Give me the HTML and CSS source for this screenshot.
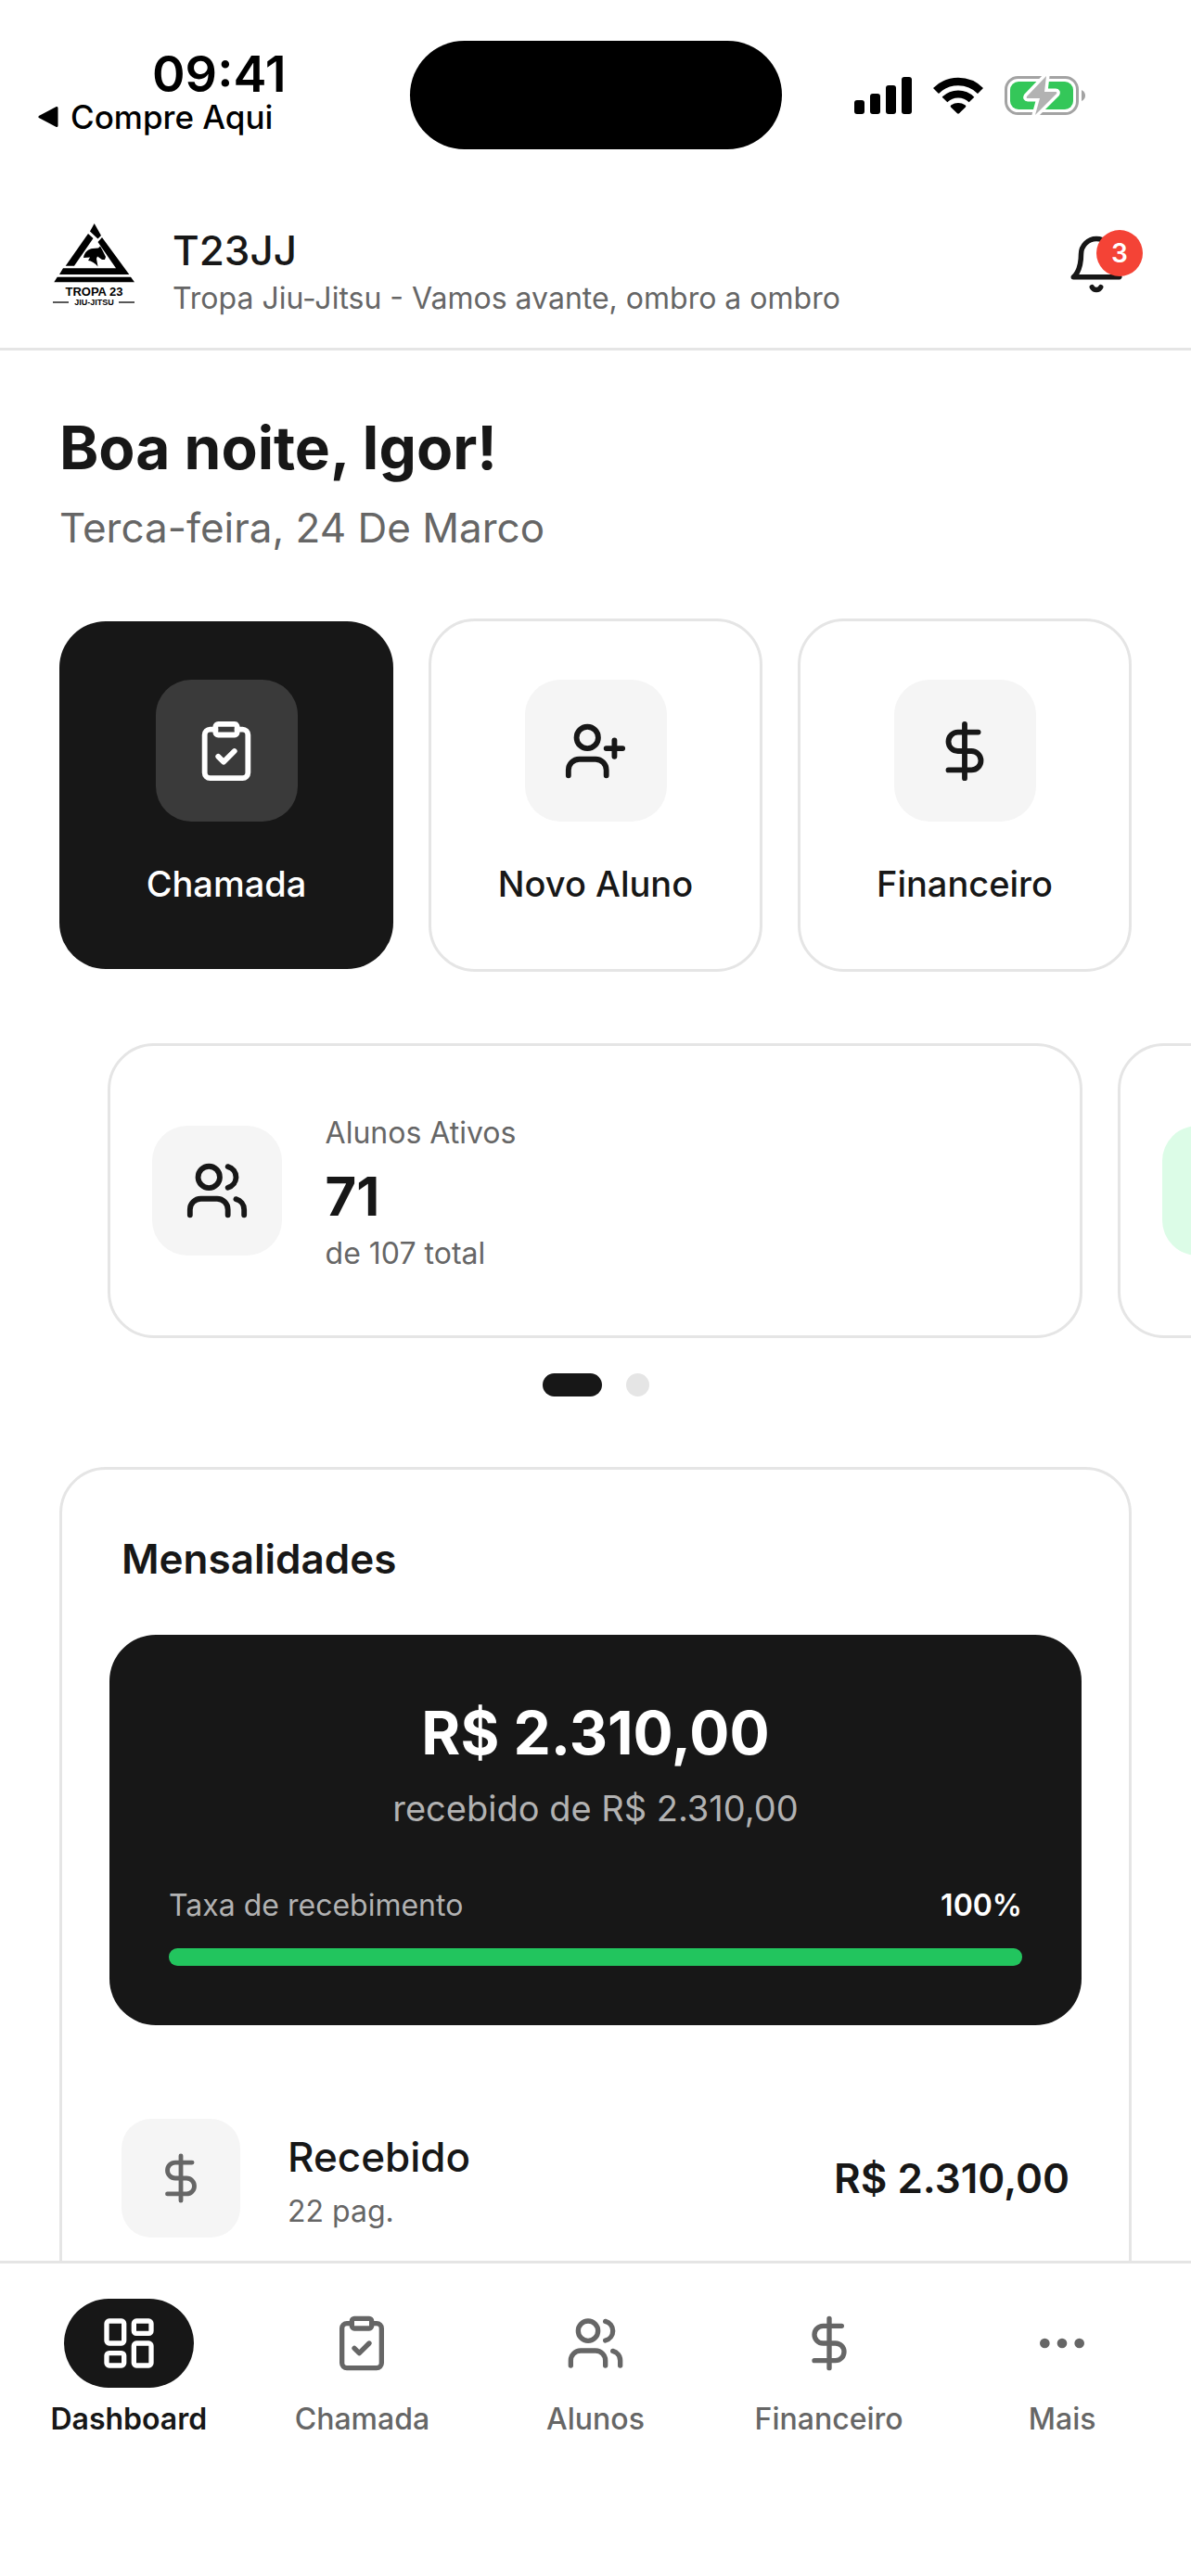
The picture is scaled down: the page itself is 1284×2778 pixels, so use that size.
FILE: index.html
```html
<!DOCTYPE html>
<html lang="pt-BR">
<head>
<meta charset="utf-8">
<meta name="viewport" content="width=device-width, initial-scale=1">
<title>T23JJ</title>
<link rel="stylesheet" href="styles.css">
</head>
<body>
<svg class="sprite" aria-hidden="true">
  <symbol id="clipboard" viewBox="0 0 24 24"><rect x="8" y="2" width="8" height="4" rx="1"/><path d="M16 4h2a2 2 0 0 1 2 2v14a2 2 0 0 1-2 2H6a2 2 0 0 1-2-2V6a2 2 0 0 1 2-2h2"/><path d="m9 14 2 2 4-4"/></symbol>
  <symbol id="user-plus" viewBox="0 0 24 24"><path d="M16 21v-2a4 4 0 0 0-4-4H6a4 4 0 0 0-4 4v2"/><circle cx="9" cy="7" r="4"/><path d="M19 8v6M22 11h-6"/></symbol>
  <symbol id="users" viewBox="0 0 24 24"><path d="M16 21v-2a4 4 0 0 0-4-4H6a4 4 0 0 0-4 4v2"/><circle cx="9" cy="7" r="4"/><path d="M22 21v-2a4 4 0 0 0-3-3.87M16 3.13a4 4 0 0 1 0 7.75"/></symbol>
  <symbol id="dollar" viewBox="0 0 24 24"><path d="M12 2v20M17 5H9.5a3.5 3.5 0 0 0 0 7h5a3.5 3.5 0 0 1 0 7H6"/></symbol>
  <symbol id="bell" viewBox="0 0 24 24"><path d="M6 8a6 6 0 0 1 12 0c0 7 3 9 3 9H3s3-2 3-9M10.3 21a1.94 1.94 0 0 0 3.4 0"/></symbol>
  <symbol id="dashboard" viewBox="0 0 24 24"><rect x="3" y="3" width="7" height="9" rx="1"/><rect x="14" y="3" width="7" height="5" rx="1"/><rect x="14" y="12" width="7" height="9" rx="1"/><rect x="3" y="16" width="7" height="5" rx="1"/></symbol>
  <symbol id="more" viewBox="0 0 24 24"><circle cx="5" cy="12" r="1"/><circle cx="12" cy="12" r="1"/><circle cx="19" cy="12" r="1"/></symbol>
</svg>

<div class="app">
  <div class="status">
    <div class="status-left">
      <div class="clock">09:41</div>
      <a class="back" href="#">
        <svg width="22" height="22" viewBox="0 0 22 22"><path d="M20 1.500V20.500L2 11Z" fill="#000" stroke="#000" stroke-width="3" stroke-linejoin="round"/></svg>
        Compre Aqui
      </a>
    </div>
    <div class="island"></div>
    <div class="status-right">
      <svg width="62" height="40" viewBox="0 0 62 40"><rect y="25" width="11" height="15" rx="3"/><rect x="17" y="18" width="11" height="22" rx="3"/><rect x="34" y="9" width="11" height="31" rx="3"/><rect x="51" width="11" height="40" rx="3"/></svg>
      <svg width="54" height="40" viewBox="0 0 54 40"><g fill="none" stroke="#000"><path d="M3 15A34 34 0 0 1 51 15" stroke-width="8.500"/><path d="M12.500 24.500A20.500 20.500 0 0 1 41.500 24.500" stroke-width="8"/></g><path d="M26 39.300 19 32.500Q18 31 19.500 30.300A13 13 0 0 1 34.500 30.300Q36 31 35 32.500L28 39.300Q27 40 26 39.300Z"/></svg>
      <svg width="88" height="44" viewBox="0 0 88 44"><rect x="1.500" y="2.500" width="77" height="39" rx="13" fill="none" stroke="#a3a3a3" stroke-width="3"/><rect x="6" y="7" width="68" height="30" rx="9" fill="#34c759"/><path d="M83 16Q87 18 87 22T83 28Z" fill="#a3a3a3"/><path d="M45 1 24 23Q23 25 25 25H38L33 43 56 20Q57 18 55 18H43Z" fill="#b2b2b2" stroke="#fff" stroke-width="7" stroke-linejoin="round" paint-order="stroke"/></svg>
    </div>
  </div>

  <header class="header">
    <svg class="logo" viewBox="0 0 96 96" role="img" aria-label="Tropa 23 Jiu-Jitsu">
      <path d="M47.700 4 55 17 51.500 20.500 43 12.500Z"/>
      <path d="M41 15 16.700 49.700H26L46.500 20Z"/>
      <path d="M56 19 85.300 59H10L14 52.300H71L51.500 24Z"/>
      <path d="M7.700 61.700H87L91 67.300H4.300Z"/>
      <path d="M36 41C37 35 41 31.500 46 31L52 30.500 54 28.500 56 32 60 40 59 43 56 43 51 39.500 50 42 51.500 50.500C49 47 44 44 41 44L43 40.500Z"/>
      <text class="logo-name" x="47.500" y="81.500" text-anchor="middle">TROPA 23</text>
      <text class="logo-sub" x="47.500" y="92" text-anchor="middle">JIU-JITSU</text>
      <path d="M3 89H20M74 89H91" stroke="#222" stroke-width="1.300"/>
    </svg>
    <div class="club">
      <div class="club-name">T23JJ</div>
      <div class="club-motto">Tropa Jiu-Jitsu - Vamos avante, ombro a ombro</div>
    </div>
    <button class="bell" type="button" aria-label="Notificações">
      <svg class="icon icon-66"><use href="#bell"/></svg>
      <span class="badge">3</span>
    </button>
  </header>

  <main class="main">
    <h1 class="greeting">Boa noite, Igor!</h1>
    <p class="date">Terca-feira, 24 De Marco</p>

    <div class="actions">
      <button class="action action-dark" type="button"><span class="tile"><svg class="icon icon-70"><use href="#clipboard"/></svg></span>Chamada</button>
      <button class="action" type="button"><span class="tile"><svg class="icon icon-70"><use href="#user-plus"/></svg></span>Novo Aluno</button>
      <button class="action" type="button"><span class="tile"><svg class="icon icon-70"><use href="#dollar"/></svg></span>Financeiro</button>
    </div>

    <div class="carousel">
      <section class="stat">
        <span class="stat-tile"><svg class="icon icon-70"><use href="#users"/></svg></span>
        <div class="stat-text">
          <div class="small">Alunos Ativos</div>
          <div class="stat-value">71</div>
          <div class="small">de 107 total</div>
        </div>
      </section>
      <section class="stat"><span class="stat-tile stat-tile-green"></span></section>
    </div>
    <div class="dots"><span class="dot dot-on"></span><span class="dot"></span></div>

    <section class="panel">
      <h2 class="panel-title">Mensalidades</h2>
      <div class="summary">
        <div class="summary-amount">R$ 2.310,00</div>
        <div class="summary-sub">recebido de R$ 2.310,00</div>
        <div class="rate"><span id="rate">Taxa de recebimento</span><strong class="rate-value">100%</strong></div>
        <div class="bar" role="progressbar" aria-labelledby="rate" aria-valuenow="100"><div class="bar-fill" style="width: 100%"></div></div>
      </div>
      <div class="row">
        <span class="row-tile"><svg class="icon icon-58"><use href="#dollar"/></svg></span>
        <div class="row-text">
          <div class="row-title">Recebido</div>
          <div class="small">22 pag.</div>
        </div>
        <div class="row-amount">R$ 2.310,00</div>
      </div>
    </section>
  </main>

  <nav class="nav">
    <a class="nav-item nav-on" href="#"><span class="nav-icon"><svg class="icon icon-64"><use href="#dashboard"/></svg></span>Dashboard</a>
    <a class="nav-item" href="#"><span class="nav-icon"><svg class="icon icon-64"><use href="#clipboard"/></svg></span>Chamada</a>
    <a class="nav-item" href="#"><span class="nav-icon"><svg class="icon icon-64"><use href="#users"/></svg></span>Alunos</a>
    <a class="nav-item" href="#"><span class="nav-icon"><svg class="icon icon-64"><use href="#dollar"/></svg></span>Financeiro</a>
    <a class="nav-item" href="#"><span class="nav-icon"><svg class="icon icon-64"><use href="#more"/></svg></span>Mais</a>
  </nav>
</div>
</body>
</html>
```
FILE: styles.css
```css
:root {
  --ink: #171717;
  --muted: #666666;
  --line: #e5e5e5;
  --soft: #f5f5f5;
}

* {
  box-sizing: border-box;
}

body {
  margin: 0;
  background: #fff;
  color: var(--ink);
  font-family: Inter, "Liberation Sans", sans-serif;
}

h1, h2, p {
  margin: 0;
}

button {
  font: inherit;
  color: inherit;
  background: none;
  border: 0;
  padding: 0;
}

a {
  color: inherit;
  text-decoration: none;
}

svg {
  display: block;
  flex: none;
}

.sprite {
  display: none;
}

.app {
  display: flex;
  flex-direction: column;
  height: 100vh;
}

.icon {
  fill: none;
  stroke: currentColor;
  stroke-width: 2;
  stroke-linecap: round;
  stroke-linejoin: round;
}

.icon-58 { width: 58px; height: 58px; }
.icon-64 { width: 64px; height: 64px; }
.icon-66 { width: 66px; height: 66px; }
.icon-70 { width: 70px; height: 70px; }

.small {
  color: var(--muted);
  font-size: 32px;
  line-height: 40px;
}

/* Status bar */
.status {
  display: grid;
  grid-template-columns: 1fr auto 1fr;
  flex: none;
  padding-top: 44px;
  height: 195px;
  color: #000;
}

.status-left {
  padding: 8px 0 0 41px;
}

.clock {
  padding-left: 123px;
  font-size: 54px;
  font-weight: 600;
  line-height: 56px;
}

.back {
  display: flex;
  align-items: center;
  gap: 13px;
  font-size: 35px;
  font-weight: 500;
  line-height: 36px;
}

.island {
  width: 401px;
  height: 117px;
  border-radius: 59px;
  background: #000;
}

.status-right {
  display: flex;
  align-items: center;
  gap: 23px;
  height: 117px;
  padding-left: 78px;
}

/* Header */
.header {
  display: flex;
  align-items: center;
  flex: none;
  height: 183px;
  padding: 0 64px 0 54px;
  border-bottom: 3px solid var(--line);
}

.logo {
  width: 96px;
  height: 96px;
}

.logo-name {
  font: bold 13px "Liberation Sans", sans-serif;
}

.logo-sub {
  font: bold 9px "Liberation Sans", sans-serif;
}

.club {
  flex: 1;
  padding: 14px 0 0 36px;
}

.club-name {
  font-size: 44px;
  font-weight: 500;
  line-height: 60px;
}

.club-motto {
  color: var(--muted);
  font-size: 32px;
  line-height: 44px;
}

.bell {
  position: relative;
  margin-right: 5px;
}

.badge {
  position: absolute;
  top: -4px;
  right: -17px;
  width: 50px;
  height: 50px;
  border-radius: 50%;
  background: #f44336;
  color: #fff;
  font-size: 28px;
  font-weight: 600;
  line-height: 50px;
  text-align: center;
}

/* Dashboard */
.main {
  flex: 1;
  min-height: 0;
  padding: 68px 64px 64px;
  overflow-y: auto;
  scrollbar-width: none;
}

.greeting {
  font-size: 64px;
  font-weight: 700;
  line-height: 74px;
}

.date {
  margin-top: 23px;
  color: var(--muted);
  font-size: 44px;
  line-height: 52px;
}

.actions {
  display: grid;
  grid-template-columns: repeat(3, 1fr);
  gap: 38px;
  margin-top: 72px;
}

.action {
  display: flex;
  flex-direction: column;
  align-items: center;
  gap: 44px;
  padding: 63px 12px 69px;
  border: 3px solid var(--line);
  border-radius: 50px;
  font-size: 38px;
  font-weight: 500;
  line-height: 46px;
}

.action-dark {
  margin: 3px 0;
  border: 0;
  background: var(--ink);
  color: #fff;
}

.tile {
  display: grid;
  place-items: center;
  width: 153px;
  height: 153px;
  border-radius: 38px;
  background: var(--soft);
}

.action-dark .tile {
  background: #3a3a3a;
}

.carousel {
  display: flex;
  gap: 38px;
  margin: 77px -64px 0;
  padding-left: 10%;
  overflow-x: auto;
  scrollbar-width: none;
}

.stat {
  display: flex;
  align-items: center;
  flex: 0 0 90%;
  gap: 47px;
  padding: 68px 45px;
  border: 3px solid var(--line);
  border-radius: 50px;
}

.stat-tile {
  display: grid;
  place-items: center;
  width: 140px;
  height: 140px;
  border-radius: 38px;
  background: var(--soft);
}

.stat-tile-green {
  background: #dcfce7;
}

.stat-text {
  padding-top: 6px;
}

.stat-value {
  margin: 12px 0 6px;
  font-size: 58px;
  font-weight: 700;
  line-height: 72px;
}

.dots {
  display: flex;
  justify-content: center;
  gap: 26px;
  margin-top: 38px;
}

.dot {
  width: 25px;
  height: 25px;
  border-radius: 13px;
  background: var(--line);
}

.dot-on {
  width: 64px;
  background: var(--ink);
}

.panel {
  margin-top: 76px;
  padding: 69px 51px;
  border: 3px solid var(--line);
  border-radius: 50px;
}

.panel-title {
  padding-left: 13px;
  font-size: 44px;
  font-weight: 600;
  line-height: 54px;
}

.summary {
  margin-top: 55px;
  padding: 69px 64px 64px;
  border-radius: 50px;
  background: var(--ink);
  color: #b2b2b2;
  text-align: center;
}

.summary-amount {
  color: #fff;
  font-size: 64px;
  font-weight: 700;
  line-height: 74px;
}

.summary-sub {
  margin-top: 21px;
  font-size: 38px;
  line-height: 46px;
}

.rate {
  display: flex;
  justify-content: space-between;
  margin-top: 62px;
  font-size: 32px;
  line-height: 40px;
}

.rate-value {
  color: #fff;
  font-weight: 600;
}

.bar {
  height: 19px;
  margin-top: 26px;
  border-radius: 10px;
  background: #3a3a3a;
}

.bar-fill {
  height: 100%;
  border-radius: 10px;
  background: #22c55e;
}

.row {
  display: flex;
  align-items: center;
  gap: 51px;
  margin-top: 101px;
  padding: 0 13px;
}

.row-tile {
  display: grid;
  place-items: center;
  width: 128px;
  height: 128px;
  border-radius: 32px;
  background: var(--soft);
  color: var(--muted);
}

.row-text {
  flex: 1;
  padding-top: 6px;
}

.row-title {
  margin-bottom: 12px;
  font-size: 44px;
  font-weight: 500;
  line-height: 54px;
}

.row-amount {
  font-size: 44px;
  font-weight: 600;
  line-height: 54px;
}

/* Bottom navigation */
.nav {
  display: grid;
  grid-template-columns: repeat(5, 1fr);
  flex: none;
  padding: 38px 13px 149px;
  border-top: 3px solid var(--line);
  background: #fff;
}

.nav-item {
  display: flex;
  flex-direction: column;
  align-items: center;
  gap: 14px;
  color: var(--muted);
  font-size: 32px;
  font-weight: 500;
  line-height: 40px;
}

.nav-icon {
  display: grid;
  place-items: center;
  width: 140px;
  height: 96px;
  border-radius: 48px;
}

.nav-on {
  color: var(--ink);
  font-weight: 600;
}

.nav-on .nav-icon {
  background: var(--ink);
  color: #fff;
}
```
